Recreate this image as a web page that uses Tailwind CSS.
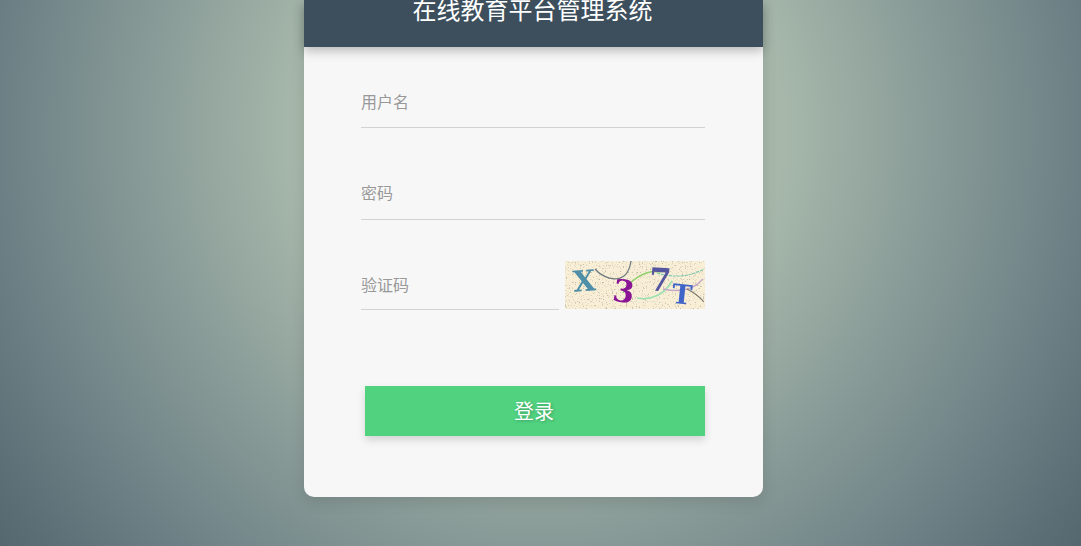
<!DOCTYPE html>
<html lang="zh-CN">
  <head>
    <meta charset="UTF-8" />
    <title>在线教育平台管理系统</title>
    <script src="https://cdn.jsdelivr.net/npm/@tailwindcss/browser@4"></script>
  </head>
  <body class="h-[546px] overflow-hidden bg-[#7f908f] bg-[radial-gradient(ellipse_560px_580px_at_540px_130px,#a7b8ab_43%,#6d8085_96%,#55676f_120%)] font-['Noto_Sans_CJK_SC','Liberation_Sans',sans-serif]">
    <div class="w-[459px] ml-[304px] bg-[#f7f7f7] rounded-b-[10px] shadow-[0_5px_15px_rgba(0,0,0,0.12)]">
      <!-- Header, cut off by the top of the window -->
      <div class="h-[47px] overflow-hidden bg-[#3d4f5d] shadow-[0_4px_10px_rgba(0,0,0,0.25)] relative">
        <h1 class="-mt-[9px] pr-[2px] text-center text-white text-[24px] leading-[36px] font-normal">在线教育平台管理系统</h1>
      </div>

      <!-- Form -->
      <form class="pl-[57px] pr-[58px] pt-[31px] pb-[61px] flex flex-col">
        <input type="text" placeholder="用户名" class="h-[50px] pb-[4px] w-full border-b border-[#d2d2d2] bg-transparent text-[16px] outline-none placeholder:text-[#999]" />
        <input type="password" placeholder="密码" class="mt-[42px] h-[50px] pb-[6px] w-full border-b border-[#d2d2d2] bg-transparent text-[16px] outline-none placeholder:text-[#999]" />
        <div class="mt-[40px] flex justify-between items-start">
          <input type="text" placeholder="验证码" class="h-[50px] pb-[2px] w-[198px] border-b border-[#d2d2d2] bg-transparent text-[16px] outline-none placeholder:text-[#999]" />
          <!-- Captcha -->
          <svg class="mt-[1px] w-[140px] h-[48px]" viewBox="0 0 140 48">
            <defs>
              <filter id="paper" x="0" y="0" width="100%" height="100%">
                <feTurbulence type="fractalNoise" baseFrequency="0.7" numOctaves="2" seed="4" />
                <feColorMatrix values="0 0 0 0 0.42  0 0 0 0 0.38  0 0 0 0 0.3  0 0 0 5 -2.9" />
              </filter>
              <filter id="soft" x="0" y="0" width="100%" height="100%"><feGaussianBlur stdDeviation="0.4" /></filter>
            </defs>
            <rect width="140" height="48" fill="#f8efd6" />
            <rect width="140" height="48" filter="url(#paper)" opacity="0.7" />
            <g filter="url(#soft)">
              <path d="M30 8c8 9 21 13 29 7 4-3 6-8 7-15" fill="none" stroke="#6f7a80" stroke-width="1.3" />
              <path d="M58 32c6-12 22-24 38-21" fill="none" stroke="#8fd06a" stroke-width="1.4" />
              <path d="M72 37c14 3 28-4 35-17" fill="none" stroke="#9fe0b0" stroke-width="1.6" />
              <path d="M92 12c16 5 32 4 47-4" fill="none" stroke="#79c7b0" stroke-width="1.1" stroke-dasharray="3 1" />
              <path d="M98 28c14 3 30 2 40-10" fill="none" stroke="#c6a9c9" stroke-width="1.4" />
              <path d="M122 28c6 3 12 7 17 13" fill="none" stroke="#77756a" stroke-width="1.1" />
              <text x="8" y="30" font-family="DejaVu Serif" font-weight="700" font-size="29" fill="#4f8ea8" transform="rotate(-4 20 20)">X</text>
              <text x="48" y="41" font-family="DejaVu Serif" font-weight="700" font-size="31" fill="#8a1296" transform="rotate(8 58 30)">3</text>
              <text x="84" y="30" font-family="DejaVu Serif" font-weight="700" font-size="32" fill="#55579f" transform="rotate(4 94 18)">7</text>
              <text x="107" y="43" font-family="DejaVu Serif" font-weight="700" font-size="27" fill="#4065c9" transform="rotate(6 118 32)">T</text>
            </g>
          </svg>
        </div>
        <button type="button" class="mt-[76px] ml-[4px] h-[50px] w-[340px] pr-[2px] bg-[#50d27f] text-white text-[20px] shadow-[0_4px_8px_rgba(0,0,0,0.15)] [text-shadow:1px_1px_3px_rgba(0,0,0,0.25)]">登录</button>
      </form>
    </div>
  </body>
</html>
